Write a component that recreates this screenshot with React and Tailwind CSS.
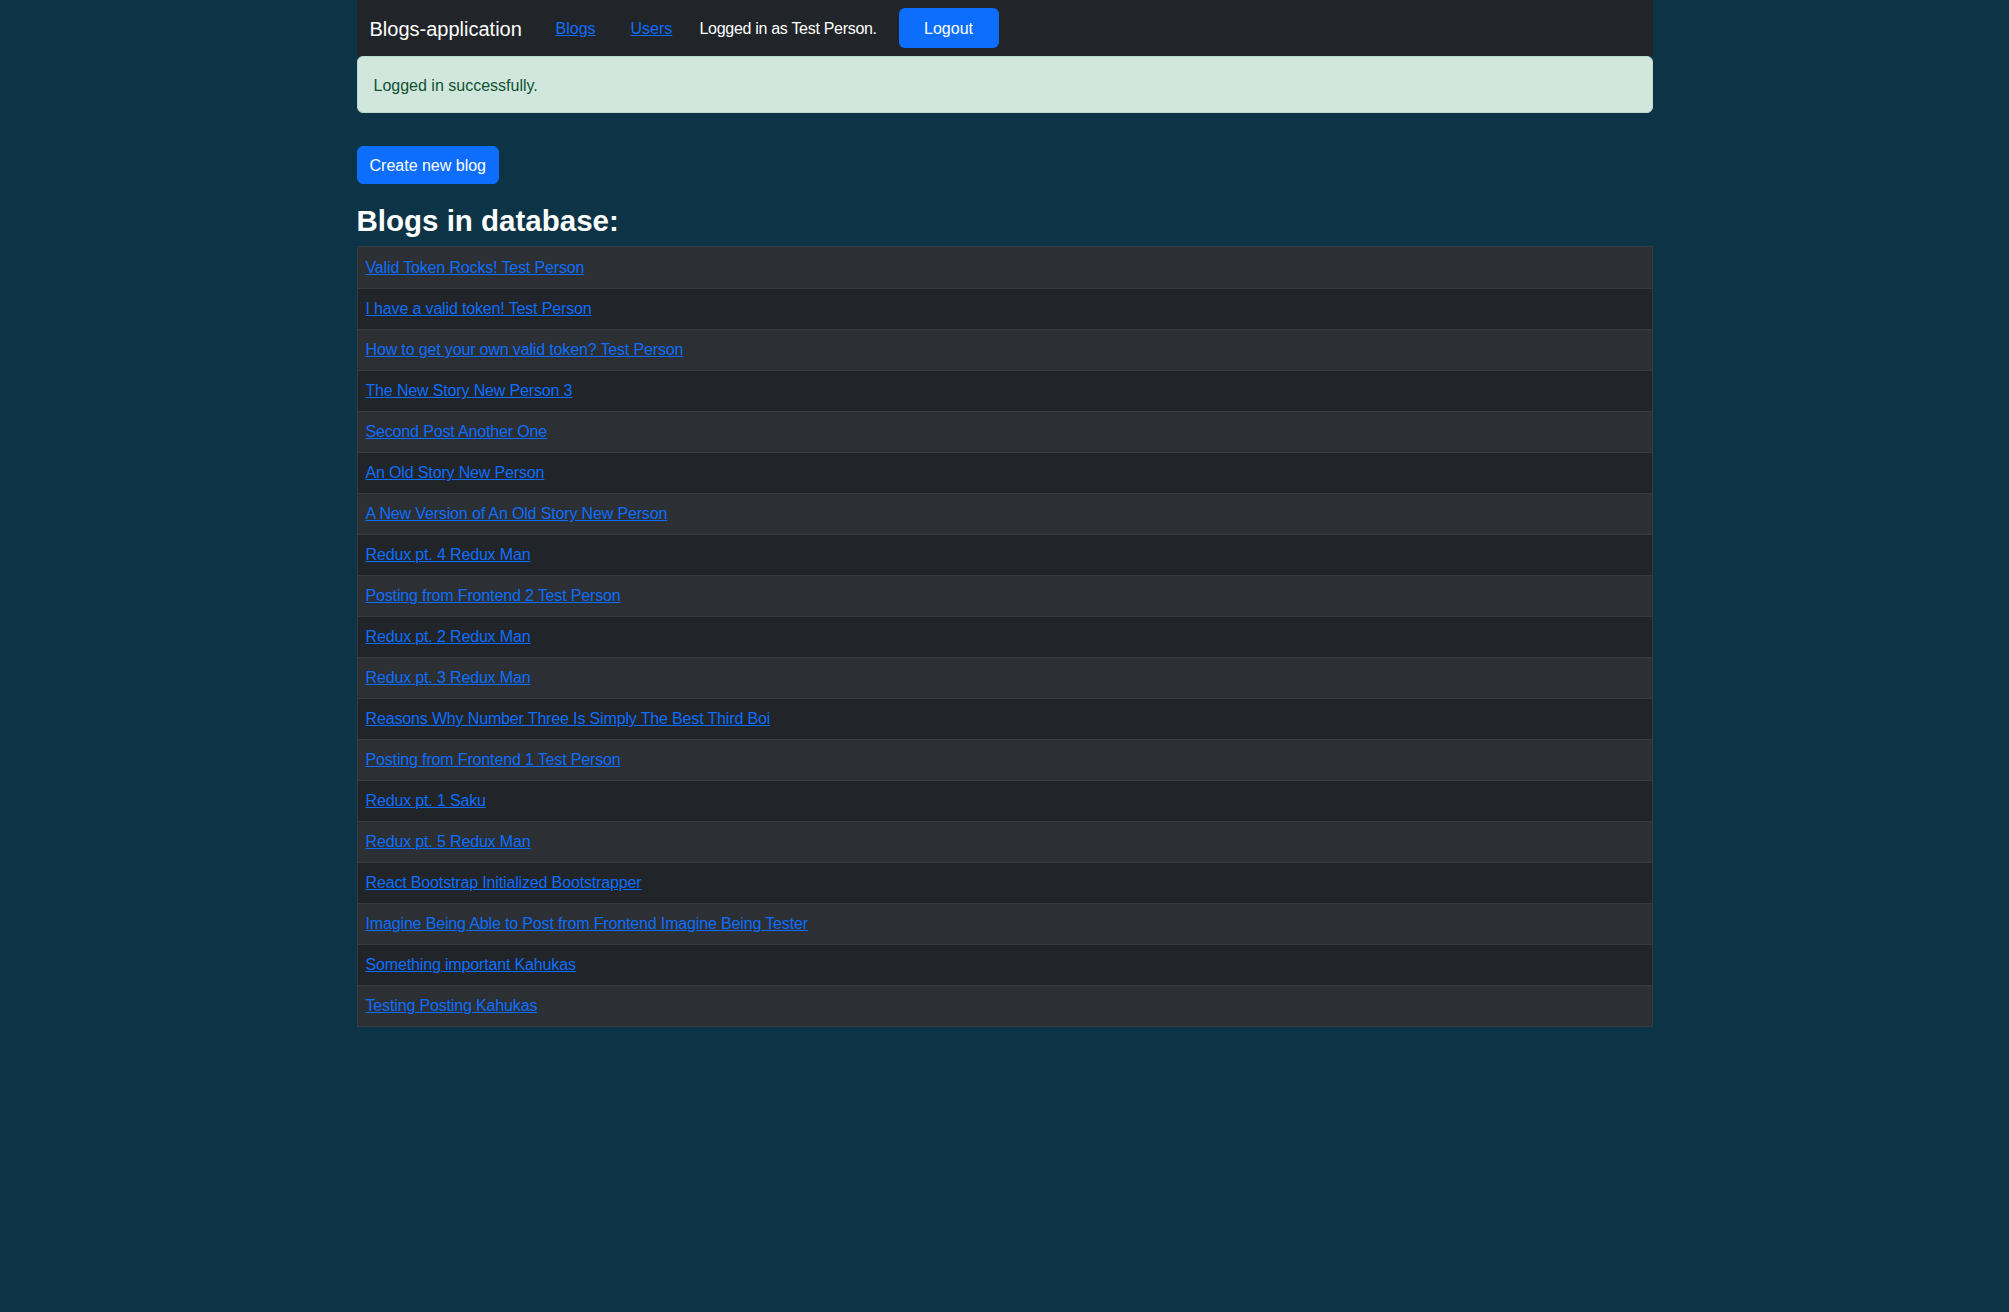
// App.jsx — blog list page (dark navbar, alert, striped table)

const BLOGS = [
  'Valid Token Rocks! Test Person',
  'I have a valid token! Test Person',
  'How to get your own valid token? Test Person',
  'The New Story New Person 3',
  'Second Post Another One',
  'An Old Story New Person',
  'A New Version of An Old Story New Person',
  'Redux pt. 4 Redux Man',
  'Posting from Frontend 2 Test Person',
  'Redux pt. 2 Redux Man',
  'Redux pt. 3 Redux Man',
  'Reasons Why Number Three Is Simply The Best Third Boi',
  'Posting from Frontend 1 Test Person',
  'Redux pt. 1 Saku',
  'Redux pt. 5 Redux Man',
  'React Bootstrap Initialized Bootstrapper',
  'Imagine Being Able to Post from Frontend Imagine Being Tester',
  'Something important Kahukas',
  'Testing Posting Kahukas',
];

function Navbar(){
  return (
    <nav className="h-[56px] bg-[#212529] flex items-center text-[16px] leading-[24px]">
      <span className="w-[199px] pl-[13px] pt-[2px] text-[20px] leading-[30px] text-white">Blogs-application</span>
      <a href="#" className="w-[75px] pt-[2px] text-[#0d6efd] underline">Blogs</a>
      <a href="#" className="w-[69px] pt-[2px] text-[#0d6efd] underline">Users</a>
      <span className="w-[199px] pt-[2px] text-white tracking-[-0.3px]">Logged in as Test Person.</span>
      <button className="w-[100px] h-[40px] pt-[2px] rounded-[6px] bg-[#0d6efd] text-white">Logout</button>
    </nav>
  );
}

export default function App(){
  return (
    <div className="min-h-screen bg-[#0d3347] font-['Liberation_Sans',Arial,sans-serif]">
      <div className="w-[1296px] mx-auto">
        <Navbar/>

        <div className="h-[57px] px-[16px] pt-[2px] flex items-center border border-[#badbcc] bg-[#d1e7dd] text-[#0f5132] text-[16px] rounded-[6px]">
          Logged in successfully.
        </div>

        <button className="mt-[33px] h-[38px] px-[12px] pt-[2px] rounded-[6px] border border-[#0d6efd] bg-[#0d6efd] text-white text-[16px]">
          Create new blog
        </button>

        <h2 className="mt-[19px] mb-[8px] text-[29.5px] leading-[1.2] font-bold text-white">Blogs in database:</h2>

        <div className="border border-[#373b3e]">
          {BLOGS.map((b, i) => (
            <div
              key={b}
              className={
                'h-[41px] px-[8px] flex items-center text-[16px] border-[#373b3e] ' +
                (i > 0 ? 'border-t ' : 'h-[40px] ') +
                (i % 2 === 0 ? 'bg-[#2c3034]' : 'bg-[#212529]')
              }
            >
              <a href="#" className="text-[#0d6efd] underline tracking-[-0.15px]">{b}</a>
            </div>
          ))}
        </div>
      </div>
    </div>
  );
}
